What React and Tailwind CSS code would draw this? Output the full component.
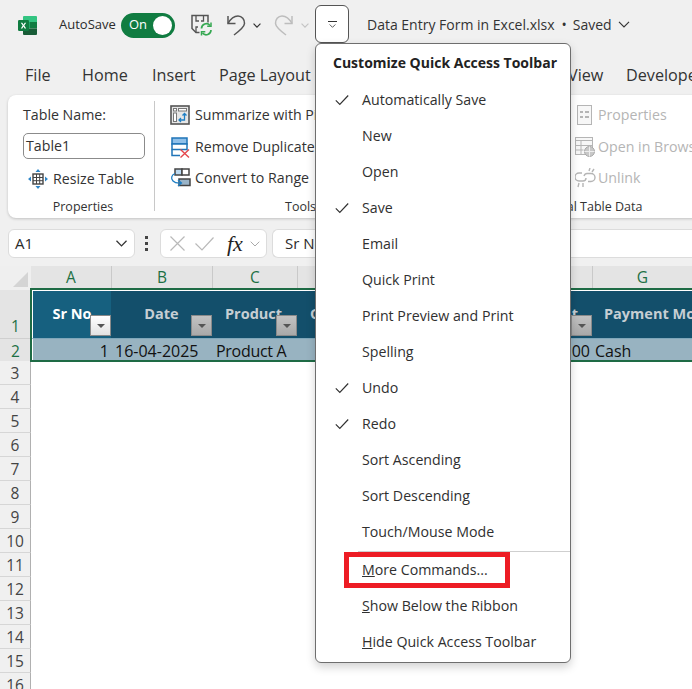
import React from "react";

const Chevron = ({ className = "", stroke = "#444", w = 10, h = 6, sw = 1.2 }) => (
  <svg className={`shrink-0 ${className}`} width={w} height={h} viewBox="0 0 10 6" fill="none" stroke={stroke} strokeWidth={sw}>
    <path d="M0.7 0.7 5 5 9.3 0.7" />
  </svg>
);

const ExcelLogo = () => (
  <svg width="21" height="21" viewBox="0 0 21 21" className="shrink-0">
    <path d="M7 1h12a1 1 0 0 1 1 1v5H6V2a1 1 0 0 1 1-1z" fill="#33c481" />
    <rect x="6" y="7" width="7" height="6.5" fill="#21a366" />
    <rect x="13" y="7" width="7" height="6.5" fill="#107c41" />
    <path d="M6 13.500h14V19a1 1 0 0 1-1 1H7a1 1 0 0 1-1-1z" fill="#185c37" />
    <rect x="1" y="5" width="11" height="11" rx="1.200" fill="#107c41" />
    <path d="M3.800 7.800h1.500l1.200 2 1.200-2h1.500l-1.900 2.800 1.900 2.800H7.700l-1.200-2-1.200 2H3.800l1.900-2.800z" fill="#fff" />
  </svg>
);

const SaveSync = () => (
  <svg width="22" height="22" viewBox="0 0 22 22" fill="none" className="shrink-0">
    <path d="M8.500 18.500H5L1 14.500V1.500H17V8.500" stroke="#555" strokeWidth="1.500" />
    <path d="M5 1.500V7H8M12.500 1.500V7H10M5 18.500V13H7" stroke="#555" strokeWidth="1.300" />
    <path d="M10.500 14.500a4.800 4.800 0 0 1 8.500-3M20 16a4.800 4.800 0 0 1-8.500 3" stroke="#36a852" strokeWidth="1.700" />
    <path d="M20 8.500v3.800h-3.800M10.500 21.500v-3.800h3.800" stroke="#36a852" strokeWidth="1.500" />
  </svg>
);

const UndoIcon = ({ stroke, flip }) => (
  <svg width="20" height="21" viewBox="0 0 20 21" fill="none" stroke={stroke} strokeWidth="1.500" className={flip ? "-scale-x-100 shrink-0" : "shrink-0"}>
    <path d="M2 1V8.500H9.500" />
    <path d="M2 8.500C4.500 4 8.500 1 12 1C16 1 18.700 4.500 18.500 8.500C18.300 12 14 15.500 8 20" />
  </svg>
);

const Summarize = () => (
  <svg width="20" height="20" viewBox="0 0 20 20" fill="none">
    <rect x="1" y="1" width="18" height="18" fill="#e6e6e6" stroke="#555" strokeWidth="1.600" />
    <rect x="3.500" y="3.500" width="3" height="2.500" fill="#fff" stroke="#777" />
    <rect x="8.500" y="3.500" width="8" height="2.500" fill="#fff" stroke="#777" />
    <rect x="3.500" y="8" width="3" height="8.500" fill="#fff" stroke="#777" />
    <path d="M14.500 8.500v6.500H9M11 13l-2 2 2 2M12.500 10.500l2-2 2 2" stroke="#1f7fc4" strokeWidth="1.300" />
  </svg>
);

const RemoveDup = () => (
  <svg width="20" height="21" viewBox="0 0 20 21" fill="none">
    <rect x="2" y="1" width="15" height="6" fill="#8fc0ea" stroke="#1f74b8" strokeWidth="1.500" />
    <rect x="2" y="7" width="15" height="5.500" fill="#fff" stroke="#1f74b8" strokeWidth="1.500" />
    <path d="M2 12.500v6h8H2z" fill="#8fc0ea" stroke="#1f74b8" strokeWidth="1.500" />
    <path d="M10.500 12.500l8.500 8M19 12.500l-8.500 8" stroke="#e5484d" strokeWidth="1.400" />
  </svg>
);

const Convert = () => (
  <svg width="21" height="20" viewBox="0 0 21 20" fill="none">
    <rect x="5" y="1" width="7" height="6" fill="#bcd9f0" stroke="#444" strokeWidth="1.500" />
    <rect x="12" y="1" width="7" height="6" fill="#fff" stroke="#444" strokeWidth="1.500" />
    <rect x="9" y="11" width="11" height="6.500" fill="#9ab4c8" stroke="#444" strokeWidth="1.500" />
    <path d="M5 5.500C1.500 7 .5 10.500 3 13S8 15 11 15M8 12l3.500 3L8 18" stroke="#1f7fc4" strokeWidth="1.300" />
  </svg>
);

const Resize = () => (
  <svg width="20" height="20" viewBox="0 0 20 20" fill="none">
    <rect x="5" y="5" width="10" height="10" fill="#fff" stroke="#444" strokeWidth="1.400" />
    <path d="M5 8.500h10M5 11.700h10M8.500 5v10M11.700 5v10" stroke="#444" />
    <path d="M10 0l2.500 3h-5zM10 20l2.500-3h-5zM0 10l3-2.500v5zM20 10l-3-2.500v5z" fill="#2e86c8" />
  </svg>
);

const GreyProps = () => (
  <svg width="15" height="20" viewBox="0 0 15 20" fill="none" stroke="#b5b5b5">
    <rect x="0.500" y="0.500" width="14" height="19" fill="#f7f7f7" />
    <path d="M3 7h3M3 12h3M8 7h4M8 12h4" strokeWidth="2" />
  </svg>
);

const GreyBrowser = () => (
  <svg width="20" height="20" viewBox="0 0 20 20" fill="none" stroke="#b5b5b5">
    <rect x="0.500" y="0.500" width="17" height="17" fill="#f7f7f7" />
    <path d="M0.500 3.500h17M0.500 8.500h17M0.500 13h8M6 3.500v14" />
    <circle cx="14.500" cy="14.500" r="5" fill="#c8c8c8" stroke="#a8a8a8" />
    <path d="M9.500 14.500h10M14.500 9.500v10" stroke="#eee" />
  </svg>
);

const GreyUnlink = () => (
  <svg width="21" height="20" viewBox="0 0 21 20" fill="none" stroke="#b5b5b5" strokeWidth="1.400">
    <path d="M7 5H4a3.500 3.500 0 0 0 0 8h4c2 0 3-1.500 3-3" />
    <path d="M9 8c.5-1.500 1.500-2.500 3-2.500h4a3.500 3.500 0 0 1 0 8h-3" />
    <path d="M15 0l-1 3M19 1l-2 3M4 15l-1 4M8 15l0 4" />
  </svg>
);

const FilterBtn = ({ active }) => (
  <div className={`absolute right-0 bottom-[2px] flex h-[21px] w-[21px] items-center justify-center border border-[#8a8a8a] ${active ? "bg-gradient-to-b from-[#ffffff] to-[#e2e2e2]" : "bg-gradient-to-b from-[#c2c2c2] to-[#a9a9a9]"}`}>
    <div className="h-0 w-0 border-x-[4px] border-t-[4px] border-x-transparent border-t-[#555]" />
  </div>
);

const MenuItem = ({ checked, children }) => (
  <div className="relative flex h-[36px] items-center pl-[46px] text-[14.200px] text-[#303030]">
    {checked && (
      <svg className="absolute left-[19px] top-1/2 -translate-y-1/2" width="14" height="11" viewBox="0 0 14 11" fill="none" stroke="#333" strokeWidth="1.200">
        <path d="M0.800 5.800 4.800 9.800 13.200 1" />
      </svg>
    )}
    <span>{children}</span>
  </div>
);

const ColHead = ({ w, children }) => (
  <div className={`flex h-full shrink-0 items-center justify-center border-r border-[#c9c9c9] text-[15.500px] ${w} text-[#1d7044]`}>
    {children}
  </div>
);

const HeadCell = ({ w, children, active, filter = true, align = "justify-center" }) => (
  <div className={`relative h-full shrink-0 ${w} ${active ? "bg-[#16607f] text-white" : "bg-[#134f6b] text-[#c6ced3]"}`}>
    <div className={`flex h-full items-center whitespace-nowrap pb-[2px] text-[14.500px] font-bold ${align}`}>{children}</div>
    {filter && <FilterBtn active={active} />}
  </div>
);

const rows = [3, 4, 5, 6, 7, 8, 9, 10, 11, 12, 13, 14, 15, 16];

export default function App() {
  return (
    <div className="relative h-[689px] w-[692px] overflow-hidden bg-[#f0f0f0] font-['Open_Sans','Noto_Sans',sans-serif] text-[#2b2b2b]">
      {/* Title bar */}
      <div className="flex h-[50px] items-center">
        <div className="ml-[17px]"><ExcelLogo /></div>
        <span className="ml-[21px] w-[58px] shrink-0 whitespace-nowrap text-[13px]">AutoSave</span>
        <div className="ml-[4px] flex h-[25px] w-[54px] shrink-0 items-center justify-between rounded-full bg-[#107c41] pl-[8px] pr-[3px]">
          <span className="text-[13px] text-white">On</span>
          <div className="h-[19px] w-[19px] rounded-full bg-white" />
        </div>
        <div className="ml-[16px]"><SaveSync /></div>
        <div className="ml-[13px]"><UndoIcon stroke="#555" /></div>
        <Chevron className="ml-[7px]" w={8} h={5} stroke="#333" sw={1.500} />
        <div className="ml-[13px]"><UndoIcon stroke="#bdbdbd" flip /></div>
        <Chevron className="ml-[7px]" w={8} h={5} stroke="#c4c4c4" sw={1.500} />
        <div className="mb-[7px] ml-[6px] flex h-[38px] w-[34px] shrink-0 flex-col items-center justify-center gap-[2px] self-end rounded-[6px] border border-[#555] bg-white">
          <div className="h-px w-[9px] bg-[#333]" />
          <Chevron w={7} h={4} stroke="#333" sw={1.200} />
        </div>
        <div className="flex items-center whitespace-nowrap pb-[2px] text-[14px] text-[#333]">
          <span className="ml-[18px]">Data Entry Form in Excel.xlsx</span>
          <span className="ml-[7px]">•</span>
          <span className="ml-[6px]">Saved</span>
          <Chevron className="ml-[5px]" w={14} h={7} stroke="#333" sw={1} />
        </div>
      </div>

      {/* Tabs */}
      <div className="flex h-[45px] items-center pt-[5px] text-[16.200px] text-[#333]">
        <span className="ml-[25px] w-[57px] shrink-0">File</span>
        <span className="w-[70px] shrink-0">Home</span>
        <span className="w-[67px] shrink-0">Insert</span>
        <span className="w-[349px] shrink-0 whitespace-nowrap">Page Layout</span>
        <span className="w-[58px] shrink-0">View</span>
        <span className="shrink-0 whitespace-nowrap">Developer</span>
      </div>

      {/* Ribbon */}
      <div className="ml-[8px] flex h-[123px] w-[700px] rounded-l-[8px] bg-white text-[14.200px] text-[#333] shadow-[0_1px_3px_rgba(0,0,0,0.2)]">
        <div className="flex w-[146px] shrink-0 flex-col pl-[15px] pt-[9px]">
          <span className="flex h-[22px] items-center">Table Name:</span>
          <div className="mt-[7px] flex h-[26px] w-[122px] items-center rounded-[5px] border border-[#8b8b8b] pl-[2px]">Table1</div>
          <div className="mt-[9px] flex h-[22px] items-center pl-[5px]">
            <Resize />
            <span className="ml-[5px] whitespace-nowrap">Resize Table</span>
          </div>
          <span className="mt-[8px] w-[120px] text-center text-[12.500px]">Properties</span>
        </div>
        <div className="mt-[6px] h-[110px] w-px shrink-0 bg-[#c8c8c8]" />
        <div className="flex w-[270px] shrink-0 flex-col pl-[15px] pt-[9px]">
          <div className="flex h-[22px] items-center gap-[5px] whitespace-nowrap"><Summarize /><span>Summarize with PivotTable</span></div>
          <div className="mt-[10px] flex h-[22px] items-center gap-[5px] whitespace-nowrap"><RemoveDup /><span>Remove Duplicates</span></div>
          <div className="mt-[9px] flex h-[22px] items-center gap-[4px] whitespace-nowrap"><Convert /><span>Convert to Range</span></div>
          <span className="mt-[9px] w-[160px] pl-[115px] text-[12.500px]">Tools</span>
        </div>
        <div className="flex flex-1 flex-col pl-[150px] pt-[9px] text-[#b5b5b5]">
          <div className="flex h-[22px] items-center whitespace-nowrap"><span className="ml-[2px] flex w-[21px]"><GreyProps /></span><span>Properties</span></div>
          <div className="mt-[10px] flex h-[22px] items-center whitespace-nowrap"><span className="w-[23px]"><GreyBrowser /></span><span>Open in Browser</span></div>
          <div className="mt-[9px] flex h-[22px] items-center whitespace-nowrap"><span className="w-[23px]"><GreyUnlink /></span><span>Unlink</span></div>
          <span className="-ml-[46px] mt-[9px] whitespace-nowrap text-[12.500px] text-[#333]">External Table Data</span>
        </div>
      </div>

      {/* Formula bar */}
      <div className="mt-[11px] flex h-[29px] items-center">
        <div className="ml-[8px] flex h-full w-[127px] items-center justify-between rounded-[6px] border border-[#dcdcdc] bg-white pl-[6px] pr-[6px] text-[15px]">
          <span>A1</span>
          <Chevron w={13} h={7} stroke="#333" sw={1.100} />
        </div>
        <div className="ml-[10px] flex w-[5px] flex-col gap-[3px]">
          <div className="h-[3px] w-[3px] bg-[#444]" />
          <div className="h-[3px] w-[3px] bg-[#444]" />
          <div className="h-[3px] w-[3px] bg-[#444]" />
        </div>
        <div className="ml-[10px] flex h-full w-[107px] items-center rounded-[6px] border border-[#dcdcdc] bg-white pl-[9px]">
          <svg className="shrink-0" width="15" height="15" viewBox="0 0 15 15" stroke="#b9b9b9" strokeWidth="1.200"><path d="M0.500 0.500 14.500 14.500M14.500 0.500 0.500 14.500" /></svg>
          <svg className="ml-[10px] shrink-0" width="19" height="14" viewBox="0 0 19 14" fill="none" stroke="#b9b9b9" strokeWidth="1.200"><path d="M0.500 6.500 7 13 18.500 0.500" /></svg>
          <span className="ml-[13px] font-['Liberation_Serif',serif] text-[22px] italic leading-none text-[#222]">fx</span>
          <Chevron className="ml-[6px]" w={12} h={6} stroke="#aaa" sw={1} />
        </div>
        <div className="ml-[5px] flex h-full flex-1 items-center rounded-l-[6px] border border-r-0 border-[#dcdcdc] bg-white pl-[12px] text-[15px]">Sr No</div>
      </div>

      {/* Column header */}
      <div className="mt-[8px] flex h-[24px] bg-[#e4e4e4]">
        <div className="relative h-full w-[31px] shrink-0 bg-[#efefef]">
          <div className="absolute bottom-[3px] right-[3px] h-0 w-0 border-b-[15px] border-l-[15px] border-b-[#d4d4d4] border-l-transparent" />
        </div>
        <ColHead w="w-[81px]">A</ColHead>
        <ColHead w="w-[101px]">B</ColHead>
        <ColHead w="w-[85px]">C</ColHead>
        <ColHead w="w-[100px]">D</ColHead>
        <ColHead w="w-[95px]">E</ColHead>
        <ColHead w="w-[100px]">F</ColHead>
        <ColHead w="w-[100px]">G</ColHead>
      </div>

      {/* Sheet */}
      <div className="relative flex flex-col bg-white">
        <div className="flex h-[48px]">
          <div className="flex w-[31px] shrink-0 items-end justify-center bg-[#e4e4e4] text-[15.500px] leading-[24px] text-[#1d7044]">1</div>
          <div className="flex h-full flex-1 border-l-2 border-white pt-px">
            <HeadCell w="w-[78px]" active>Sr No</HeadCell>
            <HeadCell w="w-[101px]">Date</HeadCell>
            <HeadCell w="w-[85px]" align="justify-start pl-[13px]">Product</HeadCell>
            <HeadCell w="w-[100px]" align="justify-start pl-[13px]">Quantity</HeadCell>
            <HeadCell w="w-[95px]" />
            <HeadCell w="w-[100px]" align="justify-end pr-[14px]">Amount</HeadCell>
            <HeadCell w="w-[100px]" filter={false} align="justify-start pl-[12px]">Payment Mode</HeadCell>
          </div>
        </div>
        <div className="flex h-[23px]">
          <div className="flex w-[31px] shrink-0 items-center justify-center border-t border-[#cfcfcf] bg-[#e4e4e4] pt-[3px] text-[15.500px] text-[#1d7044]">2</div>
          <div className="flex h-[22px] flex-1 items-center whitespace-nowrap border-l-2 border-t border-white border-t-[#7fa7ba] bg-[#98b3c1] pt-[2px] text-[16px] text-[#111]">
            <span className="w-[76px] text-right">1</span>
            <span className="ml-[6px] w-[101px]">16-04-2025</span>
            <span className="w-[354px] tracking-[-0.300px]">Product A</span>
            <span className="w-[20px] text-right">00</span>
            <span className="ml-[5px]">Cash</span>
          </div>
        </div>
        {rows.map((n) => (
          <div key={n} className="flex h-[24px]">
            <div className="flex w-[31px] shrink-0 items-center justify-center border-b border-r border-b-[#d6d6d6] border-r-[#b0b0b0] bg-[#f0f0f0] pt-[2px] text-[15.500px] text-[#444]">{n}</div>
          </div>
        ))}
        {/* Selection outline over the table */}
        <div className="pointer-events-none absolute left-[30px] top-[-2px] h-[74px] w-[670px] border-2 border-[#1e6b45]" />
      </div>

      {/* QAT dropdown menu */}
      <div className="absolute left-[315px] top-[43px] w-[256px] rounded-[6px] border border-[#6e6e6e] bg-white shadow-[0_4px_10px_rgba(0,0,0,0.18)]">
        <div className="flex h-[38px] items-center pb-[1px] pl-[17px] text-[14px] font-bold text-[#222]">Customize Quick Access Toolbar</div>
        <MenuItem checked>Automatically Save</MenuItem>
        <MenuItem>New</MenuItem>
        <MenuItem>Open</MenuItem>
        <MenuItem checked>Save</MenuItem>
        <MenuItem>Email</MenuItem>
        <MenuItem>Quick Print</MenuItem>
        <MenuItem>Print Preview and Print</MenuItem>
        <MenuItem>Spelling</MenuItem>
        <MenuItem checked>Undo</MenuItem>
        <MenuItem checked>Redo</MenuItem>
        <MenuItem>Sort Ascending</MenuItem>
        <MenuItem>Sort Descending</MenuItem>
        <MenuItem>Touch/Mouse Mode</MenuItem>
        <div className="ml-[42px] mt-px h-px bg-[#cfcfcf]" />
        <MenuItem><u>M</u>ore Commands...</MenuItem>
        <MenuItem><u>S</u>how Below the Ribbon</MenuItem>
        <MenuItem><u>H</u>ide Quick Access Toolbar</MenuItem>
        <div className="h-[2px]" />
      </div>

      {/* Red highlight */}
      <div className="pointer-events-none absolute left-[344px] top-[552px] h-[36px] w-[166px] border-[5px] border-[#ed1c24]" />
    </div>
  );
}
